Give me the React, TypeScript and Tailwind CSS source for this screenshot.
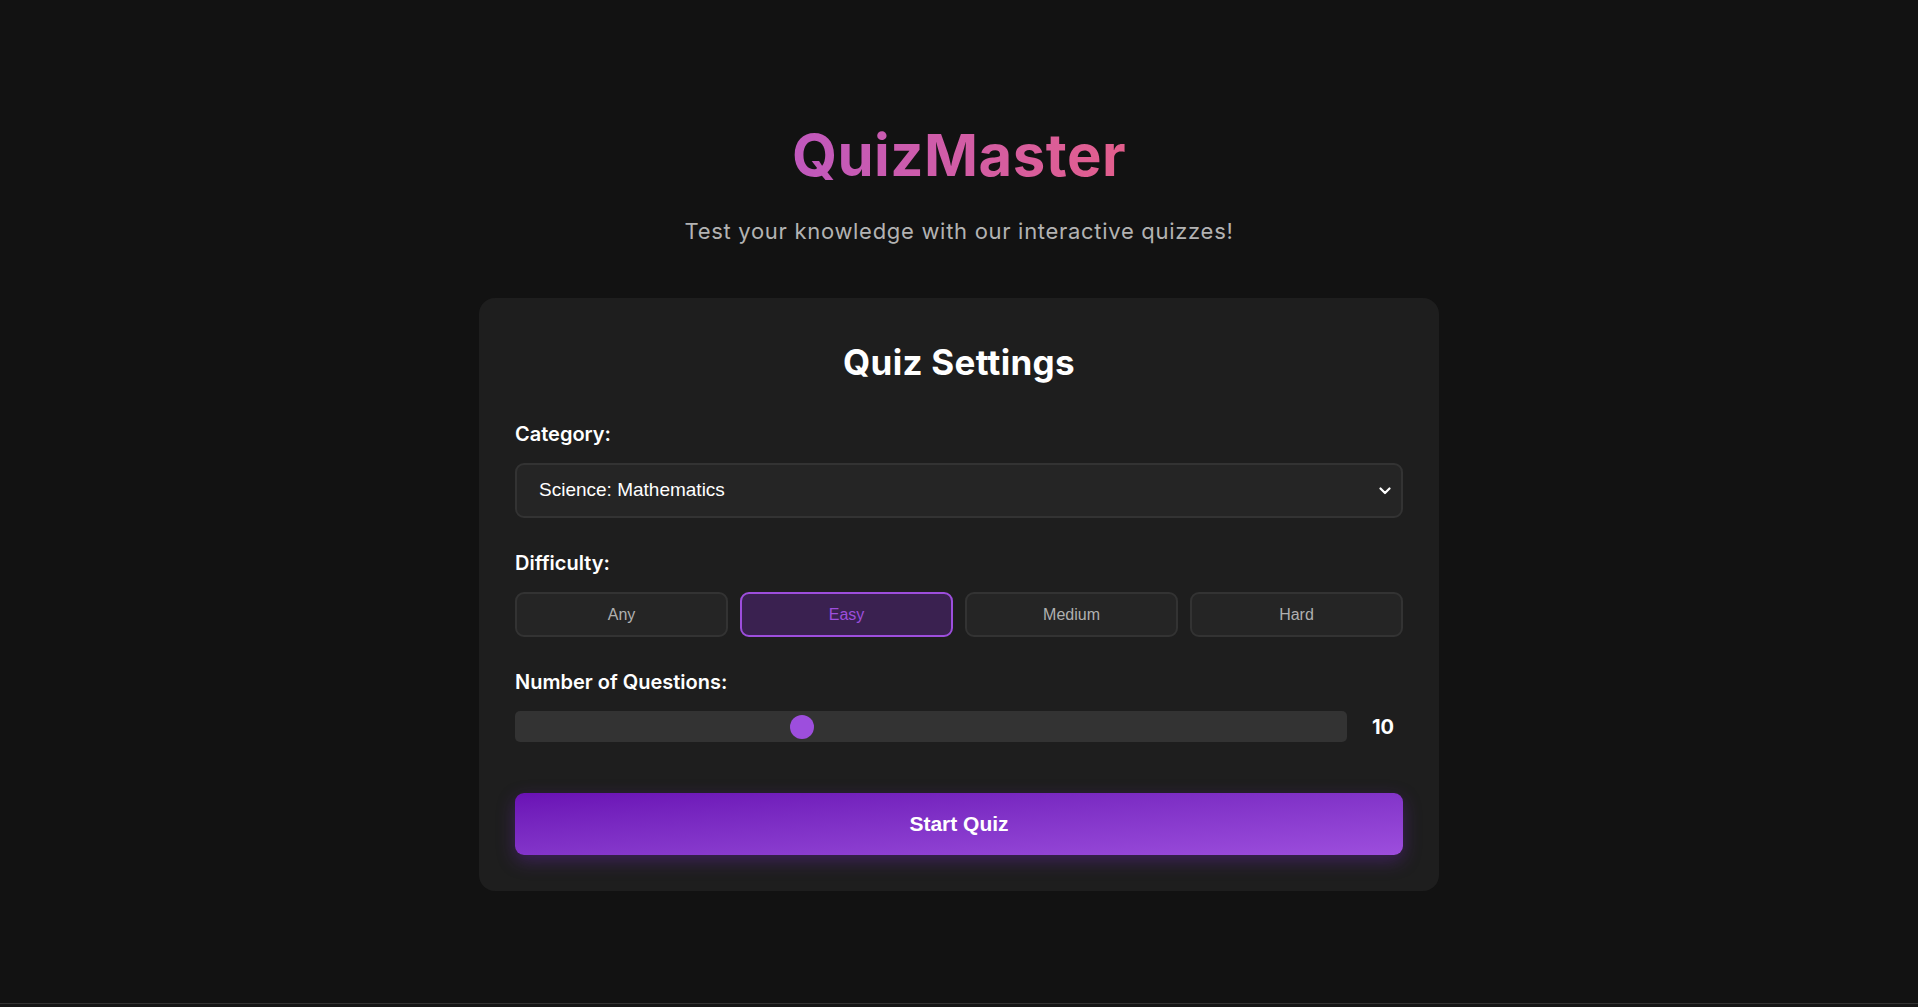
import { useState } from "react";

const difficulties = ["Any", "Easy", "Medium", "Hard"];

const Chevron = () => (
  <svg width="12" height="8" viewBox="0 0 12 8" fill="none" className="shrink-0">
    <path d="M1.5 1.5L6 6L10.5 1.5" stroke="#ffffff" strokeWidth="2.2" strokeLinecap="round" strokeLinejoin="round" />
  </svg>
);

export default function App() {
  const [difficulty, setDifficulty] = useState("Easy");
  const [count] = useState(10);
  const min = 5;
  const max = 20;
  const pct = (count - min) / (max - min);

  return (
    <div
      className="min-h-screen bg-[#121212] text-white flex flex-col"
      style={{ fontFamily: "Inter, 'Noto Sans', sans-serif" }}
    >
      <main className="flex-1 h-[1003px] flex flex-col items-center pt-[121px]">
        {/* header */}
        <header className="text-center">
          <h1 className="text-[58px] leading-[68px] font-bold tracking-[0.5px] bg-gradient-to-r from-[#c058bd] to-[#e35e8c] bg-clip-text text-transparent inline-block">
            QuizMaster
          </h1>
          <p className="mt-[28px] text-[22px] leading-[28px] tracking-[0.7px] text-[#b3b3b3]">
            Test your knowledge with our interactive quizzes!
          </p>
        </header>

        {/* settings card */}
        <section className="mt-[53px] w-[960px] bg-[#1e1e1e] rounded-2xl pt-[40px] px-[36px] pb-[36px]">
          <h2 className="text-center text-[35px] leading-[48px] font-bold tracking-[0.3px]">Quiz Settings</h2>

          <label className="block mt-[36px] text-[20px] leading-[24px] font-semibold">Category:</label>
          <div
            className="mt-[17px] h-[55px] flex items-center justify-between pl-[22px] pr-[10px] bg-[#252525] border-2 border-[#333333] rounded-[9px]"
            style={{ fontFamily: "'Liberation Sans', Arial, sans-serif" }}
          >
            <span className="text-[19px] text-white">Science: Mathematics</span>
            <Chevron />
          </div>

          <label className="block mt-[33px] text-[20px] leading-[24px] font-semibold">Difficulty:</label>
          <div
            className="mt-[17px] grid grid-cols-4 gap-3"
            style={{ fontFamily: "'Liberation Sans', Arial, sans-serif" }}
          >
            {difficulties.map((d) => (
              <button
                key={d}
                onClick={() => setDifficulty(d)}
                className={
                  d === difficulty
                    ? "h-[45px] rounded-[9px] border-2 border-[#9d4edd] bg-[#3a2150] text-[#9d4edd] text-[16px]"
                    : "h-[45px] rounded-[9px] border-2 border-[#333333] bg-[#252525] text-[#b0b0b0] text-[16px]"
                }
              >
                {d}
              </button>
            ))}
          </div>

          <label className="block mt-[33px] text-[20px] leading-[24px] font-semibold">
            Number of Questions:
          </label>
          <div className="mt-[17px] flex items-center gap-4">
            <div className="relative flex-1 h-[31px] bg-[#333333] rounded-[5px]">
              <div
                className="absolute top-1/2 -translate-y-1/2 w-6 h-6 rounded-full bg-[#9d4edd]"
                style={{ left: `calc(${pct * 100}% - ${pct * 24}px + 6px)` }}
              />
            </div>
            <span className="w-10 text-center text-[20px] font-bold">{count}</span>
          </div>

          <button
            className="mt-[51px] w-full h-[62px] rounded-[9px] bg-gradient-to-br from-[#6a11b5] to-[#9d4edd] text-white text-[21px] font-bold shadow-[0_6px_18px_rgba(120,40,200,0.35)]"
            style={{ fontFamily: "'Liberation Sans', Arial, sans-serif" }}
          >
            Start Quiz
          </button>
        </section>
      </main>
      <footer className="h-[4px] border-t border-[#333333] bg-[#161616]" />
    </div>
  );
}
